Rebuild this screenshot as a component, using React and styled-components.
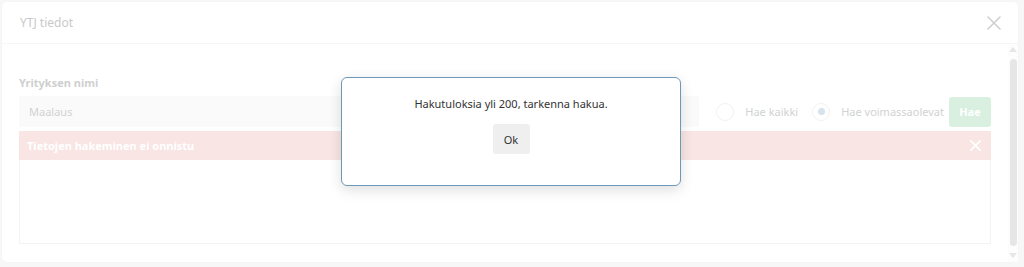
import React from "react";
import styled, { createGlobalStyle } from "styled-components";

const Global = createGlobalStyle`
  html, body { margin: 0; padding: 0; background: #f7f7f7; }
  body { font-family: "Noto Sans", "Open Sans", sans-serif; font-size: 11px; }
`;

const Page = styled.div`
  position: relative;
  width: 1024px;
  height: 267px;
  padding: 2px 6px 0 2px;
  box-sizing: border-box;
  overflow: hidden;
`;

// the faded modal behind the alert
const Card = styled.div`
  height: 260px;
  background: #fff;
  border-radius: 5px;
  display: flex;
  flex-direction: column;
  box-shadow: 0 0 2px rgba(0, 0, 0, 0.03);
`;

const Header = styled.div`
  height: 41px;
  border-bottom: 1px solid #f6f6f6;
  display: flex;
  align-items: center;
  justify-content: space-between;
  padding: 0 17px 0 18px;
  font-size: 12px;
  color: #c9c9c9;
`;

const CloseX = styled.svg`
  width: ${(p) => p.$size || 14}px;
  height: ${(p) => p.$size || 14}px;
  stroke: ${(p) => p.$color || "#cfcfcf"};
  stroke-width: ${(p) => p.$w || 1.6};
`;

const BodyWrap = styled.div`
  flex: 1;
  display: flex;
  min-height: 0;
`;

const Body = styled.div`
  flex: 1;
  padding: 31px 17px 0 17px;
  display: flex;
  flex-direction: column;
`;

const Label = styled.div`
  font-weight: 700;
  color: #cfcfcf;
  height: 16px;
  margin-bottom: 5px;
`;

const SearchRow = styled.div`
  display: flex;
  align-items: center;
  height: 31px;
`;

const Input = styled.div`
  width: 680px;
  height: 31px;
  background: #fafafa;
  border-radius: 2px;
  display: flex;
  align-items: center;
  padding-left: 10px;
  box-sizing: border-box;
  color: #d2d2d2;
`;

const Radios = styled.div`
  margin-left: auto;
  display: flex;
  align-items: center;
`;

const Radio = styled.div`
  display: flex;
  align-items: center;
  margin-right: ${(p) => p.$mr || 0}px;
  color: #d2d2d2;
  gap: 11px;
`;

const Circle = styled.span`
  width: 18px;
  height: 18px;
  border-radius: 50%;
  border: 1px solid #f2f2f2;
  box-sizing: border-box;
  display: flex;
  align-items: center;
  justify-content: center;
  &::after {
    content: "";
    width: 7px;
    height: 7px;
    border-radius: 50%;
    background: ${(p) => (p.$on ? "#d6e3ec" : "transparent")};
  }
`;

const HaeButton = styled.div`
  width: 42px;
  height: 30px;
  margin-left: 5px;
  background: #d9efdf;
  border-radius: 3px;
  color: #fff;
  font-weight: 700;
  display: flex;
  align-items: center;
  justify-content: center;
`;

const ErrorBar = styled.div`
  margin-top: 4px;
  height: 29px;
  background: #f8e5e4;
  display: flex;
  align-items: center;
  justify-content: space-between;
  padding: 0 10px 0 8px;
  color: #fff;
  font-weight: 700;
`;

const Results = styled.div`
  height: 83px;
  border: 1px solid #f3f3f3;
  border-top: none;
`;

const Scrollbar = styled.div`
  width: 10px;
  display: flex;
  flex-direction: column;
  align-items: center;
  padding: 3px 0 4px;
  background: #fdfdfd;
`;

const Arrow = styled.div`
  width: 0;
  height: 0;
  border-left: 4px solid transparent;
  border-right: 4px solid transparent;
  ${(p) => (p.$down ? "border-top" : "border-bottom")}: 5px solid #e6e6e6;
`;

const Thumb = styled.div`
  flex: 1;
  width: 7px;
  margin: 7px 0;
  background: #e6e6e6;
  border-radius: 4px;
`;

// alert dialog on top
const Dialog = styled.div`
  position: absolute;
  left: 341px;
  top: 77px;
  width: 340px;
  height: 109px;
  box-sizing: border-box;
  background: #fff;
  border: 1px solid #6e98b7;
  border-radius: 6px;
  box-shadow: 0 4px 14px rgba(0, 0, 0, 0.13);
  display: flex;
  flex-direction: column;
  align-items: center;
  padding-top: 17px;
`;

const Message = styled.div`
  color: #333;
  line-height: 18px;
`;

const OkButton = styled.div`
  margin-top: 11px;
  width: 37px;
  height: 30px;
  background: #efefef;
  border-radius: 3px;
  display: flex;
  align-items: center;
  justify-content: center;
  color: #333;
`;

const X = ({ color, w, size }) => (
  <CloseX viewBox="0 0 14 14" $color={color} $w={w} $size={size} fill="none">
    <path d="M1 1L13 13M13 1L1 13" strokeLinecap="round" />
  </CloseX>
);

export default function App() {
  return (
    <Page>
      <Global />
      <Card>
        <Header>
          <span>YTJ tiedot</span>
          <X />
        </Header>
        <BodyWrap>
          <Body>
            <Label>Yrityksen nimi</Label>
            <SearchRow>
              <Input>Maalaus</Input>
              <Radios>
                <Radio $mr={14}>
                  <Circle />
                  Hae kaikki
                </Radio>
                <Radio>
                  <Circle $on />
                  Hae voimassaolevat
                </Radio>
                <HaeButton>Hae</HaeButton>
              </Radios>
            </SearchRow>
            <ErrorBar>
              <span>Tietojen hakeminen ei onnistu</span>
              <X color="#fff" w={2.2} size={11} />
            </ErrorBar>
            <Results />
          </Body>
          <Scrollbar>
            <Arrow />
            <Thumb />
            <Arrow $down />
          </Scrollbar>
        </BodyWrap>
      </Card>
      <Dialog>
        <Message>Hakutuloksia yli 200, tarkenna hakua.</Message>
        <OkButton>Ok</OkButton>
      </Dialog>
    </Page>
  );
}
